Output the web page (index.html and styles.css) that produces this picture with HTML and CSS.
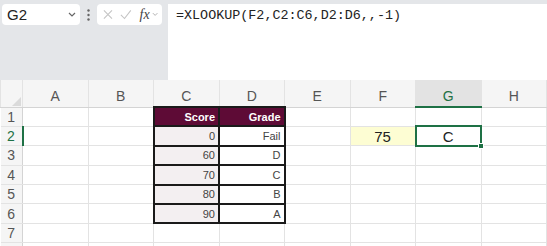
FILE: index.html
```html
<!DOCTYPE html>
<html lang="en">
<head>
    <meta charset="UTF-8">
    <title>XLOOKUP</title>
    <link rel="stylesheet" href="styles.css">
</head>
<body>
    <div class="toolbar">
        <div class="name-box">
            <span>G2</span>
            <svg width="8" height="5" viewBox="0 0 8 5"><path d="M1 1l3 3 3-3" fill="none" stroke="#666" stroke-width="1.2"/></svg>
        </div>
        <div class="grip">
            <svg width="3" height="12" viewBox="0 0 3 12"><circle cx="1.5" cy="1.5" r="1.2" fill="#666"/><circle cx="1.5" cy="6" r="1.2" fill="#666"/><circle cx="1.5" cy="10.5" r="1.2" fill="#666"/></svg>
        </div>
        <div class="fn-buttons">
            <svg width="11" height="11" viewBox="0 0 11 11"><path d="M1 1l9 9M10 1l-9 9" stroke="#c4c4c4" stroke-width="1.2"/></svg>
            <svg width="13" height="11" viewBox="0 0 13 11"><path d="M1 6l4 4 7-9" fill="none" stroke="#c4c4c4" stroke-width="1.2"/></svg>
            <span class="fx">fx</span>
            <svg width="7" height="5" viewBox="0 0 7 5"><path d="M1 1l2.5 2.5L6 1" fill="none" stroke="#aaa" stroke-width="1"/></svg>
        </div>
        <div class="formula">=XLOOKUP(F2,C2:C6,D2:D6,,-1)</div>
    </div>

    <table class="sheet">
        <colgroup>
            <col class="row-col">
            <col><col><col><col><col><col><col><col>
        </colgroup>
        <tr class="head-row">
            <th class="corner"><svg width="9" height="9" viewBox="0 0 9 9"><path d="M9 0v9H0z" fill="#dadada"/></svg></th>
            <th>A</th><th>B</th><th>C</th><th>D</th><th>E</th><th>F</th><th class="active">G</th><th>H</th>
        </tr>
        <tr>
            <th class="row-head">1</th>
            <td></td><td></td>
            <td class="tbl tbl-head">Score</td><td class="tbl tbl-head">Grade</td>
            <td></td><td></td><td></td><td></td>
        </tr>
        <tr>
            <th class="row-head active">2</th>
            <td></td><td></td>
            <td class="tbl score">0</td><td class="tbl">Fail</td>
            <td></td><td class="lookup">75</td><td class="selected">C<span class="handle"></span></td><td></td>
        </tr>
        <tr>
            <th class="row-head">3</th>
            <td></td><td></td>
            <td class="tbl score">60</td><td class="tbl">D</td>
            <td></td><td></td><td></td><td></td>
        </tr>
        <tr>
            <th class="row-head">4</th>
            <td></td><td></td>
            <td class="tbl score">70</td><td class="tbl">C</td>
            <td></td><td></td><td></td><td></td>
        </tr>
        <tr>
            <th class="row-head">5</th>
            <td></td><td></td>
            <td class="tbl score">80</td><td class="tbl">B</td>
            <td></td><td></td><td></td><td></td>
        </tr>
        <tr>
            <th class="row-head">6</th>
            <td></td><td></td>
            <td class="tbl score">90</td><td class="tbl">A</td>
            <td></td><td></td><td></td><td></td>
        </tr>
        <tr>
            <th class="row-head">7</th>
            <td></td><td></td><td></td><td></td><td></td><td></td><td></td><td></td>
        </tr>
        <tr>
            <th class="row-head"></th>
            <td></td><td></td><td></td><td></td><td></td><td></td><td></td><td></td>
        </tr>
    </table>
</body>
</html>
```

FILE: styles.css
```css
body {
    margin: 0;
    font-family: "Liberation Sans", Arial, sans-serif;
    background-color: white;
    width: 547px;
    height: 246px;
    overflow: hidden;
}
.toolbar {
    display: flex;
    align-items: flex-start;
    height: 80px;
    padding: 4px 0 0 2px;
    box-sizing: border-box;
    background-color: #e4e6e9;
}
.name-box {
    display: flex;
    align-items: center;
    justify-content: space-between;
    width: 78px;
    height: 21px;
    padding: 0 4px 0 5px;
    box-sizing: border-box;
    background-color: white;
    border-radius: 4px;
    font-size: 15px;
    color: #222;
}
.grip {
    width: 17px;
    height: 21px;
    display: flex;
    align-items: center;
    justify-content: center;
}
.fn-buttons {
    display: flex;
    align-items: center;
    gap: 7px;
    width: 65px;
    height: 21px;
    padding: 0 4px 0 6px;
    box-sizing: border-box;
    background-color: white;
    border-radius: 4px;
}
.fn-buttons .fx {
    font-family: "Liberation Serif", serif;
    font-style: italic;
    font-size: 14px;
    color: #444;
    margin-left: 1px;
    margin-right: -5px;
}
.formula {
    flex: 1;
    height: 76px;
    margin-left: 6px;
    padding: 4px 8px;
    box-sizing: border-box;
    background-color: white;
    font-family: "Liberation Mono", monospace;
    font-size: 13.4px;
    color: #222;
}
.sheet {
    border-collapse: collapse;
    table-layout: fixed;
    width: 546px;
}
.sheet col {
    width: 65.5px;
}
.sheet col.row-col {
    width: 22px;
}
.sheet th,
.sheet td {
    border: 1px solid #e3e3e3;
    padding: 0 4px;
    height: 19.4px;
    box-sizing: border-box;
    font-weight: normal;
}
.sheet .head-row th {
    height: 27px;
    padding-top: 5px;
    background-color: #f5f5f5;
    color: #555;
    font-size: 14px;
    border-top: none;
    border-bottom: 1px solid #d4d4d4;
}
.sheet .head-row th.corner {
    text-align: right;
    vertical-align: bottom;
    padding: 0 1px 1px 0;
}
.head-row th.corner svg {
    display: block;
    margin-left: auto;
}
.sheet .head-row th.active {
    background-color: #e3e3e3;
    color: #1e7145;
    border-bottom: 2px solid #1e7145;
}
.sheet .row-head {
    background-color: #f5f5f5;
    color: #555;
    font-size: 14px;
    text-align: center;
    border-left: none;
    border-right: 1px solid #d4d4d4;
}
.sheet .row-head.active {
    color: #1e7145;
    border-right: 2px solid #1e7145;
}
.sheet .tbl {
    border: 2px solid #1a1a1a;
    text-align: right;
    font-size: 11px;
    color: #444;
    padding-right: 3px;
}
.sheet .tbl-head {
    background-color: #5e0b36;
    color: white;
    font-weight: bold;
}
.sheet .score {
    background-color: #f3eff1;
}
.sheet .lookup {
    background-color: #fdfdd3;
    text-align: center;
    font-size: 15px;
    color: #222;
}
.sheet .selected {
    position: relative;
    border: 2px solid #1e7145;
    text-align: center;
    font-size: 15px;
    color: #222;
}
.handle {
    position: absolute;
    right: -4px;
    bottom: -4px;
    width: 4px;
    height: 4px;
    background-color: #1e7145;
    border: 1px solid white;
}
```
